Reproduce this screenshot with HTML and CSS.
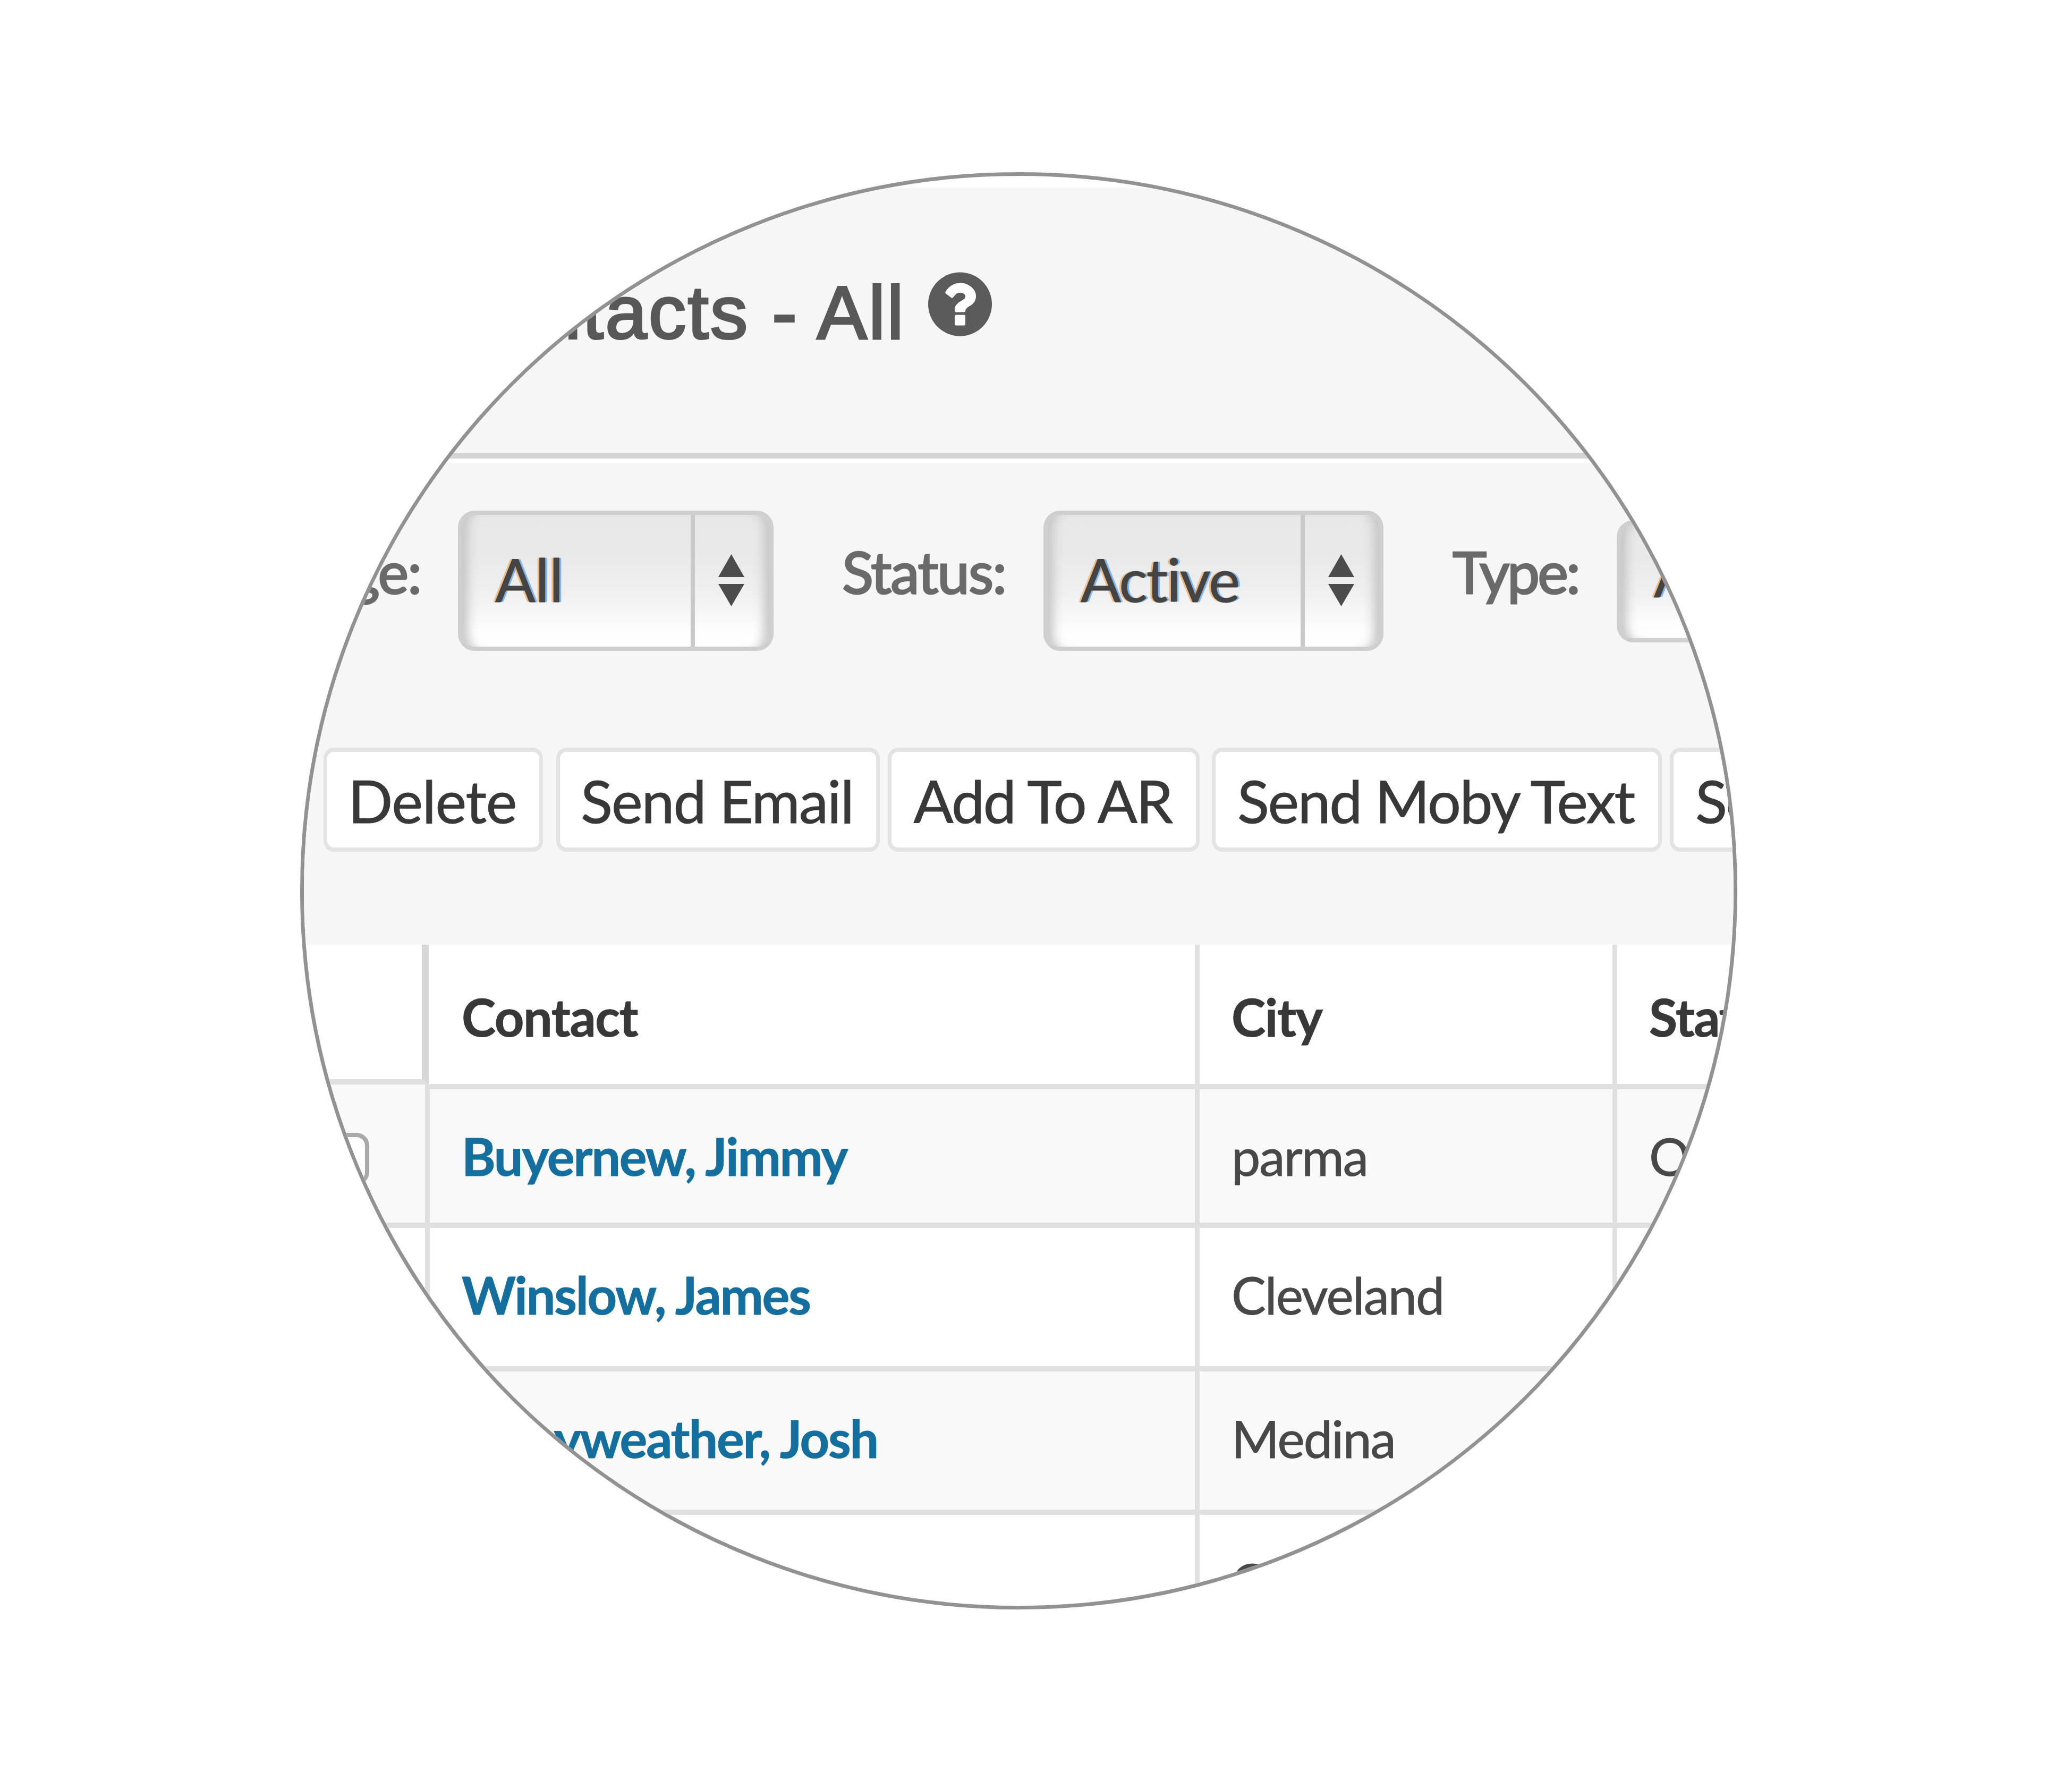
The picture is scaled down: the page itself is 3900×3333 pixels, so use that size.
FILE: index.html
```html
<!DOCTYPE html>
<html lang="en">
<head>
<meta charset="utf-8">
<title>Contacts - All</title>
<link rel="stylesheet" href="styles.css">
</head>
<body>
<main class="lens">
  <section class="panel">
    <header class="titlebar">
      <h1 class="title">Contacts - All</h1>
      <svg class="help" viewBox="0 0 1536 1536" aria-label="Help"><circle cx="768" cy="768" r="768" fill="#5b5b5b"/><path fill="#fff" d="M896 1248v-192q0-14-9-23t-23-9h-192q-14 0-23 9t-9 23v192q0 14 9 23t23 9h192q14 0 23-9t9-23zm256-672q0-88-55.500-163t-138.500-116-170-41q-243 0-371 213-15 24 8 42l132 100q7 6 19 6 16 0 25-12 53-68 86-92 34-24 86-24 48 0 85.500 26t37.500 59q0 38-20 61t-68 45q-63 28-115.500 86.500t-52.500 125.500v36q0 14 9 23t23 9h192q14 0 23-9t9-23q0-19 21.500-49.500t54.500-49.500q32-18 49-28.500t46-35 44.500-48 28-60.500 12.500-81z"/></svg>
    </header>
    <div class="filters">
      <span class="label label-stage">Stage:</span>
      <div class="select select-stage"><span class="value">All</span><span class="arrows"><svg viewBox="0 0 49 98"><path d="M24.500 0L49 43H0zM0 56h49L24.500 98z"/></svg></span></div>
      <span class="label label-status">Status:</span>
      <div class="select select-status"><span class="value value-status">Active</span><span class="arrows"><svg viewBox="0 0 49 98"><path d="M24.500 0L49 43H0zM0 56h49L24.500 98z"/></svg></span></div>
      <span class="label label-type">Type:</span>
      <div class="select select-type"><span class="value">All</span></div>
    </div>
    <div class="actions">
      <button class="btn btn-delete">Delete</button>
      <button class="btn btn-email">Send Email</button>
      <button class="btn btn-ar">Add To AR</button>
      <button class="btn btn-moby">Send Moby Text</button>
      <button class="btn btn-last">Send Text</button>
    </div>
  </section>
  <section class="table">
    <div class="row head"><div class="cell"></div><div class="cell">Contact</div><div class="cell">City</div><div class="cell">State</div></div>
    <div class="row row-1 odd"><div class="cell check"><i class="box"></i></div><div class="cell link">Buyernew, Jimmy</div><div class="cell">parma</div><div class="cell">OH</div></div>
    <div class="row row-2"><div class="cell"></div><div class="cell link">Winslow, James</div><div class="cell">Cleveland</div><div class="cell"></div></div>
    <div class="row row-3 odd"><div class="cell"></div><div class="cell link">Mayweather, Josh</div><div class="cell">Medina</div><div class="cell"></div></div>
    <div class="row row-4"><div class="cell"></div><div class="cell"></div><div class="cell">Cleveland</div><div class="cell"></div></div>
  </section>
</main>
</body>
</html>
```
FILE: styles.css
```css
* { box-sizing: border-box; }
body {
  margin: 0;
  width: 3900px;
  height: 3333px;
  overflow: hidden;
  background: #fff;
  font-family: Lato, sans-serif;
}
.lens {
  display: flow-root;
  width: 2705px;
  height: 2705px;
  margin: 324px 0 0 565px;
  padding-top: 22px;
  border: 7px solid #929292;
  border-radius: 50%;
  overflow: hidden;
  background: #fff;
}
.panel { height: 1425px; background: #f6f6f6; }

.titlebar {
  display: flex;
  height: 510px;
  padding-top: 159px;
  border-bottom: 11px solid #d4d4d4;
}
.title {
  width: 1132px;
  margin: 6px 43px 0 0;
  font: 400 141px/1 "Liberation Sans", Arial, sans-serif;
  letter-spacing: 3.2px;
  text-align: right;
  white-space: nowrap;
  color: #585858;
  -webkit-text-stroke: 4px #585858;
}
.help { width: 120px; height: 121px; }

.filters {
  display: flex;
  align-items: flex-start;
  height: 544px;
  padding-top: 89px;
  border-top: 9px solid #fff;
}
.label {
  display: flex;
  justify-content: flex-end;
  flex: none;
  margin: 59px 64px 0 0;
  font-size: 109px;
  line-height: 1;
  letter-spacing: -2.2px;
  white-space: nowrap;
  color: #6a6a6a;
  -webkit-text-stroke: 3px #6a6a6a;
}
.label-stage { width: 220px; margin-right: 70px; }
.label-status { width: 437px; margin-right: 71px; }
.label-type { width: 367px; margin-right: 72px; letter-spacing: -4px; }
.select {
  flex: none;
  display: flex;
  height: 264px;
  border: 8px solid #cfcfcf;
  border-radius: 32px;
  background: linear-gradient(#e8e8e8 0, #e9e9e9 30%, #f0f0f0 60%, #fdfdfd 88%, #fff 100%);
  box-shadow: inset 26px 0 20px -16px #c4c4c4, inset -26px 0 20px -16px #c4c4c4;
}
.select-stage { width: 594px; }
.select-status { width: 640px; }
.select-type { width: 560px; height: 230px; margin-top: 18px; }
.value {
  flex: 1;
  padding: 65px 0 0 62px;
  font-size: 112px;
  line-height: 1;
  color: #444;
  -webkit-text-stroke: 1px #444;
  text-shadow: -4px 0 1px rgba(240, 150, 60, .6), 4px 0 1px rgba(50, 140, 240, .6);
}
.value-status { letter-spacing: -2px; }
.select-type .value { padding-top: 38px; }
.arrows {
  width: 148px;
  padding: 74px 0 0 44px;
  border-left: 8px solid #c9c9c9;
}
.arrows svg { display: block; width: 49px; height: 98px; fill: #4c4c4c; }

.actions { display: flex; padding-left: 37px; }
.btn {
  flex: none;
  display: flex;
  justify-content: center;
  align-items: flex-start;
  height: 196px;
  margin: 0;
  padding: 36px 4px 0 0;
  border: solid #e3e3e3;
  border-width: 8px 7px;
  border-radius: 20px;
  background: #fff;
  font: 400 111px/1 Lato, sans-serif;
  letter-spacing: -2.4px;
  white-space: nowrap;
  color: #383838;
  -webkit-text-stroke: 1px #383838;
}
.btn-delete { width: 413px; letter-spacing: -1.3px; }
.btn-email { width: 609px; margin-left: 25px; letter-spacing: -2px; }
.btn-ar { width: 587px; margin-left: 15px; }
.btn-moby { width: 847px; margin-left: 23px; }
.btn-last { width: 600px; margin-left: 15px; padding-left: 41px; justify-content: flex-start; }

.row {
  display: grid;
  grid-template-columns: 237px 1449px 786px 500px;
}
.head { height: 272px; }
.row-1 { height: 261px; }
.row-2 { height: 270px; }
.row-3 { height: 270px; }
.row-4 { height: 270px; }
.cell {
  padding: 77px 0 0 60px;
  border: solid #e0e0e0;
  border-width: 0 9px 10px 0;
  font-size: 97px;
  line-height: 1;
  letter-spacing: -2px;
  white-space: nowrap;
  color: #484848;
  -webkit-text-stroke: 1px currentColor;
}
.odd .cell { background: #f9f9f9; }
.head .cell {
  padding-top: 87px;
  font-weight: 700;
  letter-spacing: -1.4px;
  color: #383838;
}
.head .cell:first-child {
  width: 235px;
  height: 263px;
  border-right: 13px solid #d8d8d8;
}
.row-1 .check { margin-top: -9px; padding: 91px 0 0 27px; }
.box {
  display: block;
  width: 96px;
  height: 98px;
  border: 8px solid #a9a9a9;
  border-radius: 24px;
  background: #fff;
}
.cell.link { font-weight: 700; letter-spacing: -2.2px; color: #146f9f; }
.row-3 .link { padding-left: 100px; }
```
